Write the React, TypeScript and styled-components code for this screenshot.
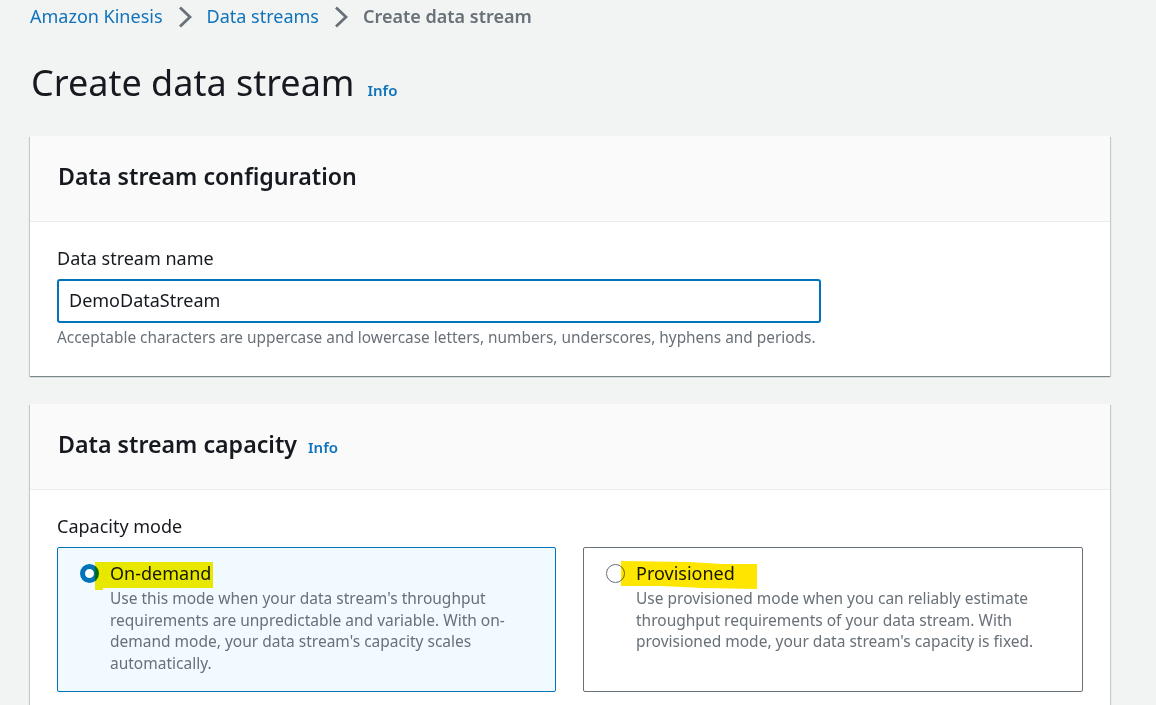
import React from "react";
import styled, { createGlobalStyle } from "styled-components";

const Global = createGlobalStyle`
  html, body { margin: 0; padding: 0; height: 705px; overflow: hidden; background: #f2f3f3; }
  body { font-family: "Noto Sans", "Open Sans", sans-serif; color: #16191f; }
`;

const Page = styled.div`
  height: 705px;
  overflow: hidden;
  padding: 0 46px 0 30px;
  box-sizing: border-box;
`;

const Breadcrumbs = styled.nav`
  display: flex;
  align-items: center;
  height: 32px;
  font-size: 18px;
  line-height: 32px;
`;

const Crumb = styled.a`
  color: #0f73bb;
`;

const CurrentCrumb = styled.span`
  color: #687078;
  font-weight: 600;
`;

const Chevron = styled.svg`
  width: 14px;
  height: 22px;
  margin: 2px 15px 0 15px;
  fill: none;
  stroke: #687078;
  stroke-width: 2.8;
`;

const TitleRow = styled.div`
  display: flex;
  align-items: baseline;
  gap: 13px;
  margin: 24px 0 26px;
  padding-left: 1px;
`;

const Title = styled.h1`
  margin: 0;
  font-size: 36px;
  line-height: 54px;
  font-weight: 400;
`;

const Info = styled.a`
  color: #0f73bb;
  font-size: 15px;
  font-weight: 600;
`;

const HeaderInfo = styled(Info)`
  margin-top: 5px;
`;

const Card = styled.section`
  background: #fff;
  box-shadow: 0 1px 1px 0 rgba(0, 28, 36, 0.3), 1px 1px 1px 0 rgba(0, 28, 36, 0.15), -1px 1px 1px 0 rgba(0, 28, 36, 0.15);
  margin-bottom: 28px;
`;

const CardHeader = styled.header`
  display: flex;
  align-items: center;
  gap: 11px;
  height: 86px;
  box-sizing: border-box;
  padding: 0 28px 5px;
  background: #fafafa;
  border-bottom: 1px solid #eaeded;
`;

const CardTitle = styled.h2`
  margin: 0;
  font-size: 23.2px;
  font-weight: 600;
`;

const CardBody = styled.div`
  padding: 24px 27px 27px;
`;

const Label = styled.div`
  font-size: 18px;
  line-height: 24px;
  margin-bottom: 9px;
`;

const Input = styled.div`
  width: 764px;
  height: 44px;
  box-sizing: border-box;
  border: 2px solid #0073bb;
  border-radius: 3px;
  padding: 0 10px;
  font-size: 18px;
  line-height: 38px;
  background: #fff;
`;

const Hint = styled.div`
  margin-top: 4px;
  font-size: 15.4px;
  line-height: 22px;
  color: #687078;
  transform: translateY(-0.5px);
`;

const Tiles = styled.div`
  display: grid;
  grid-template-columns: 499px 500px;
  gap: 27px;
`;

const Tile = styled.div<{ $selected?: boolean }>`
  height: 145px;
  box-sizing: border-box;
  display: flex;
  gap: 11px;
  padding: 14px 22px;
  border: 1px solid ${(p) => (p.$selected ? "#0073bb" : "#687078")};
  border-radius: 2px;
  background: ${(p) => (p.$selected ? "#f1faff" : "#fff")};
`;

const Radio = styled.span<{ $selected?: boolean }>`
  flex: none;
  width: 19px;
  height: 19px;
  box-sizing: border-box;
  margin-top: 2px;
  border-radius: 50%;
  border: ${(p) => (p.$selected ? "5.5px solid #0073bb" : "1.5px solid #687078")};
  background: #fff;
`;

const TileText = styled.div`
  position: relative;
`;

const TileTitle = styled.div`
  font-size: 18px;
  line-height: 22px;
`;

const TileDesc = styled.div`
  font-size: 15.5px;
  line-height: 21.5px;
  color: #687078;
  margin-top: 4px;
`;

const Highlight = styled.span`
  position: absolute;
  height: 28px;
  mix-blend-mode: multiply;
`;

const DemandHighlight = styled(Highlight)`
  top: 0;
  left: -15px;
  width: 118px;
  background: #f5ec00;
  clip-path: polygon(0 0, 100% 0, 100% 26px, 8px 26px, 8px 28px, 0 28px);
`;

const ProvisionedHighlight = styled(Highlight)`
  top: -1px;
  left: -15px;
  width: 136px;
  background: #ffe600;
  clip-path: polygon(0 0, 50% 1px, 75% 3px, 100% 3px, 100% 28px, 60% 27px, 30% 25px, 0 25px);
`;

const Chev = () => (
  <Chevron viewBox="0 0 14 22">
    <path d="M2 1.5l10 9.5-10 9.5" />
  </Chevron>
);

export default function App() {
  return (
    <Page>
      <Global />
      <Breadcrumbs>
        <Crumb>Amazon Kinesis</Crumb>
        <Chev />
        <Crumb>Data streams</Crumb>
        <Chev />
        <CurrentCrumb>Create data stream</CurrentCrumb>
      </Breadcrumbs>
      <TitleRow>
        <Title>Create data stream</Title>
        <Info>Info</Info>
      </TitleRow>
      <Card>
        <CardHeader>
          <CardTitle>Data stream configuration</CardTitle>
        </CardHeader>
        <CardBody>
          <Label>Data stream name</Label>
          <Input>DemoDataStream</Input>
          <Hint>Acceptable characters are uppercase and lowercase letters, numbers, underscores, hyphens and periods.</Hint>
        </CardBody>
      </Card>
      <Card>
        <CardHeader>
          <CardTitle>Data stream capacity</CardTitle>
          <HeaderInfo>Info</HeaderInfo>
        </CardHeader>
        <CardBody>
          <Label>Capacity mode</Label>
          <Tiles>
            <Tile $selected>
              <Radio $selected />
              <TileText>
                <TileTitle>On-demand</TileTitle>
                <DemandHighlight />
                <TileDesc>
                  Use this mode when your data stream's throughput requirements are unpredictable and variable. With on-demand mode, your data stream's capacity scales automatically.
                </TileDesc>
              </TileText>
            </Tile>
            <Tile>
              <Radio />
              <TileText>
                <TileTitle>Provisioned</TileTitle>
                <ProvisionedHighlight />
                <TileDesc>
                  Use provisioned mode when you can reliably estimate throughput requirements of your data stream. With provisioned mode, your data stream's capacity is fixed.
                </TileDesc>
              </TileText>
            </Tile>
          </Tiles>
        </CardBody>
      </Card>
    </Page>
  );
}
